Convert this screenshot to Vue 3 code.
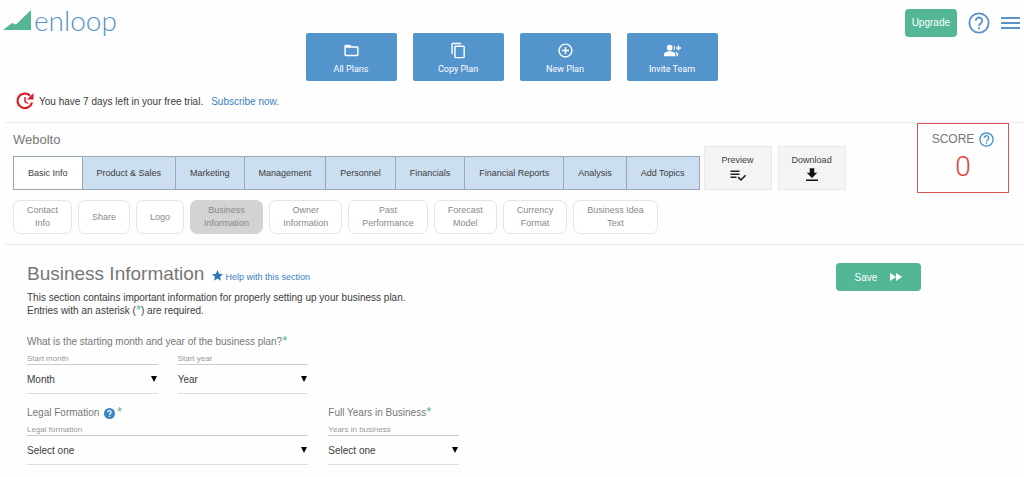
<script setup>
import { ref } from 'vue'

const actions = [
  { label: 'All Plans', icon: 'folder' },
  { label: 'Copy Plan', icon: 'copy' },
  { label: 'New Plan', icon: 'plus' },
  { label: 'Invite Team', icon: 'team' },
]
const icons = {
  folder: 'M20 6h-8l-2-2H4c-1.100 0-2 .9-2 2v12c0 1.100.9 2 2 2h16c1.100 0 2-.9 2-2V8c0-1.100-.9-2-2-2zm0 12H4V8h16v10z',
  copy: 'M16 1H4c-1.100 0-2 .9-2 2v14h2V3h12V1zm3 4H8c-1.100 0-2 .9-2 2v14c0 1.100.9 2 2 2h11c1.100 0 2-.9 2-2V7c0-1.100-.9-2-2-2zm0 16H8V7h11v14z',
  plus: 'M13 7h-2v4H7v2h4v4h2v-4h4v-2h-4V7zm-1-5C6.480 2 2 6.480 2 12s4.480 10 10 10 10-4.480 10-10S17.520 2 12 2zm0 18c-4.410 0-8-3.590-8-8s3.590-8 8-8 8 3.590 8 8-3.590 8-8 8z',
  team: 'M8 4a4 4 0 1 0 0 8a4 4 0 0 0 0-8zM0 20v-3c0-2.500 5-4 8-4s8 1.500 8 4v3zM13 4.200a4 4 0 0 1 0 7.600c1.600-2.300 1.600-5.300 0-7.600zM15.500 13.300c2.500.6 4.500 1.900 4.500 3.700v3h-2.500v-3c0-1.500-.8-2.700-2-3.700zM19.500 5h2v2.500H24v2h-2.500V12h-2V9.500H17v-2h2.500z',
}
const tabs = ['Basic Info', 'Product & Sales', 'Marketing', 'Management', 'Personnel', 'Financials', 'Financial Reports', 'Analysis', 'Add Topics']
const sections = [
  ['Contact', 'Info'], ['Share'], ['Logo'], ['Business', 'Information'], ['Owner', 'Information'],
  ['Past', 'Performance'], ['Forecast', 'Model'], ['Currency', 'Format'], ['Business Idea', 'Text'],
]
const activeTab = ref(0)
const activeSection = ref(3)
</script>

<template>
  <div class="page">
    <header class="top">
      <a class="logo" href="#" aria-label="enloop">
        <svg viewBox="0 0 28 20" width="28" height="20" aria-hidden="true"><path d="M0 20 9 13l4 1.500L28 0v20z" fill="#53b797" /></svg>
        <span>enloop</span>
      </a>
      <nav class="actions" aria-label="Plans">
        <button v-for="a in actions" :key="a.label" type="button" class="action">
          <svg viewBox="0 0 24 24" width="17" height="17" aria-hidden="true"><path :d="icons[a.icon]" fill="#fff" /></svg>
          <span>{{ a.label }}</span>
        </button>
      </nav>
      <div class="tools">
        <button type="button" class="green upgrade">Upgrade</button>
        <button type="button" class="plain" aria-label="Help">
          <svg viewBox="0 0 24 24" width="22" height="22" fill="none" stroke="#5792cc" stroke-width="2"><circle cx="12" cy="12" r="10.500" /><path d="M8.500 9.500a3.500 3.500 0 1 1 5.600 2.800C12.800 13.300 12 13.900 12 15.200M12 16.700v2" /></svg>
        </button>
        <button type="button" class="plain" aria-label="Menu">
          <svg viewBox="0 0 19 14" width="19" height="14" stroke="#5792cc" stroke-width="2"><path d="M0 2h19M0 7h19M0 12h19" /></svg>
        </button>
      </div>
    </header>

    <p class="trial">
      <svg viewBox="0 0 18 18" width="18" height="18" fill="none" stroke="#dc1f26" stroke-width="2.200" aria-hidden="true"><path d="M14 3.600A7.300 7.300 0 1 0 16 10.500" /><path d="M17.500 1v6.500H11z" fill="#dc1f26" stroke="none" /><path d="M9 5v4.500l3 2" stroke-width="1.500" /></svg>
      <span>You have 7 days left in your free trial.</span>
      <a href="#">Subscribe now.</a>
    </p>

    <section class="plan">
      <div class="plan-main">
        <div class="plan-row">
          <div>
            <h2>Webolto</h2>
            <nav class="tabs" aria-label="Plan areas">
              <button v-for="(t, i) in tabs" :key="t" type="button" :class="{ active: i === activeTab }" @click="activeTab = i">{{ t }}</button>
            </nav>
          </div>
          <div class="outputs">
            <button type="button">
              <span>Preview</span>
              <svg viewBox="0 0 24 24" width="18" height="18" aria-hidden="true"><path d="M14 10H2v2h12v-2zm0-4H2v2h12V6zM2 16h8v-2H2v2zm19.500-4.500L23 13l-7 7-4.500-4.500L13 14l3 3 5.500-5.500z" fill="#222" /></svg>
            </button>
            <button type="button">
              <span>Download</span>
              <svg viewBox="0 0 24 24" width="18" height="18" aria-hidden="true"><path d="M19 9h-4V3H9v6H5l7 7 7-7zM4 18v2h16v-2H4z" fill="#111" /></svg>
            </button>
          </div>
        </div>
        <nav class="pills" aria-label="Basic info sections">
          <button v-for="(s, i) in sections" :key="i" type="button" :class="{ active: i === activeSection }" @click="activeSection = i">
            <span v-for="w in s" :key="w">{{ w }}</span>
          </button>
        </nav>
      </div>
      <aside class="score">
        <div class="score-title">
          <span>SCORE</span>
          <button type="button" class="plain" aria-label="About the score">
            <svg viewBox="0 0 24 24" width="15" height="15" fill="none" stroke="#4b92cd" stroke-width="2.200"><circle cx="12" cy="12" r="10.500" /><path d="M8.500 9.500a3.500 3.500 0 1 1 5.600 2.800C12.800 13.300 12 13.900 12 15M12 16.500v2.200" /></svg>
          </button>
        </div>
        <strong>0</strong>
      </aside>
    </section>

    <main class="content">
      <form class="form" @submit.prevent>
        <div class="heading">
          <h1>Business Information</h1>
          <a href="#"><svg viewBox="0 0 24 24" width="11" height="11" aria-hidden="true"><path d="m12 0 3.500 8.300 8.500.7-6.500 5.700 2 8.800L12 18.800l-7.500 4.700 2-8.800L0 9l8.500-.7z" fill="#2f76b8" /></svg><span>Help with this section</span></a>
        </div>
        <p class="intro">This section contains important information for properly setting up your business plan.<br>Entries with an asterisk (<b>*</b>) are required.</p>

        <p class="question">What is the starting month and year of the business plan?<b>*</b></p>
        <div class="fields">
          <div class="field">
            <label for="month">Start month</label>
            <div class="pick"><select id="month"><option>Month</option></select></div>
          </div>
          <div class="field">
            <label for="year">Start year</label>
            <div class="pick"><select id="year"><option>Year</option></select></div>
          </div>
        </div>

        <div class="fields second">
          <div class="field wide">
            <p class="question">Legal Formation
              <svg viewBox="0 0 12 12" width="11" height="11" aria-hidden="true"><circle cx="6" cy="6" r="6" fill="#3a86c4" /><path d="M4.200 4.600a1.800 1.800 0 1 1 2.900 1.400C6.300 6.500 6 6.700 6 7.500M6 8.500v1.300" fill="none" stroke="#fff" stroke-width="1.300" /></svg>
              <b>*</b></p>
            <label for="legal">Legal formation</label>
            <div class="pick"><select id="legal"><option>Select one</option></select></div>
          </div>
          <div class="field">
            <p class="question">Full Years in Business<b>*</b></p>
            <label for="years">Years in business</label>
            <div class="pick"><select id="years"><option>Select one</option></select></div>
          </div>
        </div>
      </form>
      <button type="button" class="green save">
        <span>Save</span>
        <svg viewBox="0 0 12 8" width="12" height="8" aria-hidden="true"><path d="M0 0l6 4-6 4zM6 0l6 4-6 4z" fill="#fff" /></svg>
      </button>
    </main>
  </div>
</template>

<style>
body {
  background: #fefefe;
}
</style>

<style scoped>
.page {
  font-family: "Liberation Sans", Arial, sans-serif;
  font-size: 10px;
  color: #3c3c3c;
}
button, select {
  font: inherit;
  color: inherit;
  margin: 0;
  padding: 0;
  border: 0;
  background: none;
  cursor: pointer;
}
h1, h2, p {
  margin: 0;
  font-weight: 400;
}
svg {
  display: block;
  flex: none;
}
a {
  color: #3a7fbe;
  text-decoration: none;
}
.plain {
  display: flex;
}
.top {
  display: grid;
  grid-template-columns: 1fr auto 1fr;
  align-items: start;
  padding: 0 4px 0 3px;
}
.logo {
  display: flex;
  align-items: flex-start;
  padding-top: 10px;
  color: #5792c4;
}
.logo span {
  margin-left: 3px;
  font: 300 28px/20px Lato, sans-serif;
}
.actions {
  display: flex;
  gap: 16px;
  padding-top: 33px;
}
.action {
  display: flex;
  flex-direction: column;
  align-items: center;
  gap: 4px;
  width: 91px;
  padding: 9px 0 6px;
  border-radius: 2px;
  background: #5494cd;
  color: #fff;
  font: 400 9px/12px Roboto, sans-serif;
}
.tools {
  display: flex;
  justify-content: flex-end;
  align-items: center;
  gap: 11px;
  padding-top: 9px;
}
.green {
  background: #53b797;
  color: #fff;
  border-radius: 4px;
}
.upgrade {
  padding: 8px 7px;
  line-height: 12px;
}
.trial {
  display: flex;
  align-items: center;
  padding: 11px 16px 12px;
}
.trial span {
  margin: 0 8px 0 5px;
}
.plan {
  display: flex;
  justify-content: space-between;
  align-items: flex-start;
  margin-left: 4px;
  padding-right: 15px;
  border: solid #ececec;
  border-width: 1px 0;
}
.plan-main {
  padding: 9px 0 10px 9px;
}
.plan-row {
  display: flex;
  align-items: flex-end;
  gap: 4px;
}
h2 {
  margin-bottom: 9px;
  font-size: 13px;
  line-height: 15px;
  color: #777;
}
.tabs {
  display: flex;
  border: 1px solid #99a8b4;
  font-size: 9px;
}
.tabs button {
  padding: 0 14px;
  line-height: 32px;
  background: #cbdff0;
  white-space: nowrap;
}
.tabs button + button {
  border-left: 1px solid #99a8b4;
}
.tabs .active {
  background: #fff;
}
.outputs {
  display: flex;
  gap: 6px;
}
.outputs button {
  display: flex;
  flex-direction: column;
  align-items: center;
  width: 68px;
  padding: 7px 0 5px;
  border: 1px solid #e8e8e8;
  background: #f4f4f4;
  font-size: 9px;
  line-height: 12px;
}
.pills {
  display: flex;
  gap: 6px;
  margin-top: 10px;
}
.pills button {
  display: flex;
  flex-direction: column;
  justify-content: center;
  align-items: center;
  padding: 3px 13px;
  border: 1px solid #e4e4e4;
  border-radius: 7px;
  background: #fff;
  color: #888;
  font-size: 9px;
  line-height: 13px;
}
.pills .active {
  border-color: #d3d3d3;
  background: #d3d3d3;
}
.score {
  display: flex;
  flex-direction: column;
  align-items: center;
  gap: 6px;
  box-sizing: border-box;
  width: 92px;
  padding: 7px 0 11px;
  border: 1px solid #d9534f;
  color: #777;
}
.score-title {
  display: flex;
  align-items: center;
  gap: 5px;
  font-size: 12px;
  line-height: 16px;
}
.score strong {
  font: 300 28px/28px Roboto, sans-serif;
  color: #e0443e;
}
.content {
  display: flex;
  justify-content: space-between;
  align-items: flex-start;
  padding: 18px 103px 10px 27px;
}
.form {
  flex: 0 1 432px;
}
.heading {
  display: flex;
  align-items: flex-end;
  gap: 8px;
}
h1 {
  font-size: 19px;
  line-height: 22px;
  color: #777;
}
.heading a {
  display: flex;
  gap: 2px;
  font-size: 9px;
  line-height: 15px;
}
b {
  font-size: 13px;
  line-height: 10px;
  font-weight: 400;
  color: #53b797;
}
.intro {
  margin: 6px 0 18px;
  line-height: 13px;
}
.question {
  line-height: 13px;
  color: #777;
}
.question svg {
  display: inline-block;
  margin: 0 2px;
  vertical-align: middle;
}
.fields {
  display: grid;
  grid-template-columns: repeat(3, 1fr);
  column-gap: 20px;
  margin-top: 6px;
}
.second {
  margin-top: 12px;
}
.wide {
  grid-column: span 2;
}
.field label {
  display: block;
  border-bottom: 1px solid #ccc;
  font-size: 8px;
  line-height: 10px;
  color: #999;
}
.field .question {
  margin-bottom: 6px;
}
.pick {
  position: relative;
  border-bottom: 1px solid #ddd;
}
.pick::after {
  content: "";
  position: absolute;
  right: 1px;
  top: 11px;
  border: solid transparent;
  border-width: 6px 3px 0;
  border-top-color: #000;
  pointer-events: none;
}
.pick select {
  display: block;
  appearance: none;
  width: 100%;
  height: 28px;
}
.save {
  display: flex;
  justify-content: center;
  align-items: center;
  gap: 13px;
  width: 85px;
  height: 28px;
}
</style>
